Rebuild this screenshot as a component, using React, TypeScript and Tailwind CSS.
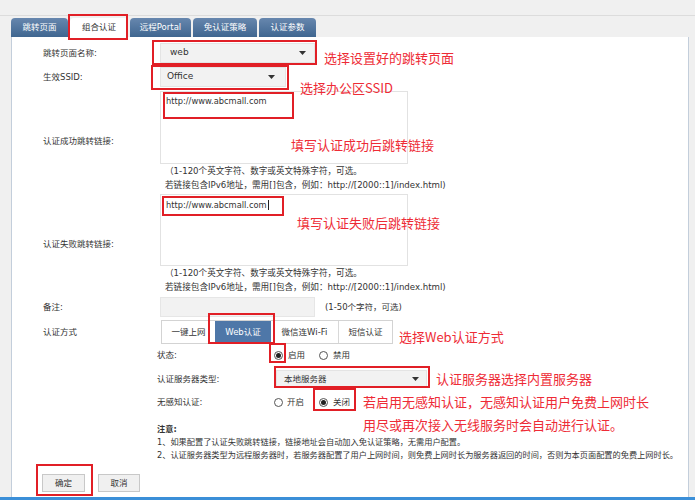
import React from "react";

const ui = "font-['DejaVu_Sans','Noto_Sans_CJK_SC',sans-serif]";
const note = "font-['Noto_Sans_CJK_SC',sans-serif] text-[13px] leading-[16px] text-[#ee2b36] whitespace-nowrap";

function Arrow() {
  return (
    <svg width="7" height="4" viewBox="0 0 7 4">
      <path d="M0 0h7L3.5 4z" fill="#333" />
    </svg>
  );
}

function Radio({ checked }: { checked?: boolean }) {
  return (
    <span className="w-[9px] h-[9px] rounded-full border border-[#555] bg-white flex items-center justify-center">
      {checked && <span className="w-[5px] h-[5px] rounded-full bg-[#222]" />}
    </span>
  );
}

function Label({ children }: { children: React.ReactNode }) {
  return <div className="w-[148px] shrink-0 pl-[31px] text-[8.5px] text-[#333]">{children}</div>;
}

function Hints() {
  return (
    <div className="pl-[5px] text-[8.6px] leading-[14px] text-[#333] whitespace-nowrap">
      <div>（1-120个英文字符、数字或英文特殊字符，可选。</div>
      <div>若链接包含IPv6地址，需用[]包含，例如：http://[2000::1]/index.html)</div>
    </div>
  );
}

const tabs = [
  { t: "跳转页面", w: "w-[57px]" },
  { t: "组合认证", w: "w-[58px]", active: true },
  { t: "远程Portal", w: "w-[61px]" },
  { t: "免认证策略", w: "w-[64px]" },
  { t: "认证参数", w: "w-[57px]" },
];

function RedBox({ className }: { className: string }) {
  return <div className={"absolute border-2 border-[#e11f26] " + className} />;
}

export default function App() {
  return (
    <div className={"relative w-[695px] h-[500px] bg-[#f0f0f0] overflow-hidden " + ui}>
      <div className="h-[16px] border-b border-[#dcdcdc]" />
      <div className="h-[21px] flex items-end pl-[11px] gap-[2px]">
        {tabs.map((tab) => (
          <div
            key={tab.t}
            className={
              "h-[19px] rounded-t-[4px] flex items-center justify-center text-[8.5px] " +
              tab.w +
              (tab.active
                ? " bg-white text-[#333]"
                : " bg-gradient-to-b from-[#6787ae] to-[#3f6690] text-white")
            }
          >
            {tab.t}
          </div>
        ))}
      </div>

      <div className="ml-[11px] w-[678px] h-[460px] bg-white border-x border-[#c3cedb] flex flex-col text-[#333]">
        <div className="mt-[6px] h-[20px] flex items-center">
          <Label>跳转页面名称:</Label>
          <div className="w-[155px] h-[20px] bg-[#f2f2f2] border border-[#e4e4e4] flex items-center justify-between pl-[9px] pr-[8px] text-[9px]">
            web
            <Arrow />
          </div>
        </div>

        <div className="mt-[4px] h-[20px] flex items-center">
          <Label>生效SSID:</Label>
          <div className="w-[126px] h-[20px] bg-[#f2f2f2] border border-[#e4e4e4] flex items-center justify-between pl-[6px] pr-[10px] text-[9px]">
            Office
            <Arrow />
          </div>
        </div>

        <div className="mt-[4px] flex items-center">
          <Label>认证成功跳转链接:</Label>
          <div>
            <div className="w-[248px] h-[73px] border border-[#e2e2e2] bg-white px-[5px] pt-[3px] text-[8.3px]">
              http://www.abcmall.com
            </div>
            <Hints />
          </div>
        </div>

        <div className="mt-[2px] flex items-center">
          <Label>认证失败跳转链接:</Label>
          <div>
            <div className="w-[248px] h-[72px] border border-[#e2e2e2] bg-white px-[5px] pt-[4px] text-[8.3px]">
              http://www.abcmall.com<span className="border-l border-[#222] ml-[1px]" />
            </div>
            <Hints />
          </div>
        </div>

        <div className="mt-[3px] h-[20px] flex items-center">
          <Label>备注:</Label>
          <div className="w-[155px] h-[20px] bg-[#f2f2f2] border border-[#e6e6e6]" />
          <span className="ml-[10px] text-[8.5px]">(1-50个字符，可选)</span>
        </div>

        <div className="mt-[3px] h-[24px] flex items-center">
          <Label>认证方式</Label>
          <div className="ml-[1px] h-[24px] flex border border-[#d3d3d3] bg-white text-[8.5px]">
            <div className="w-[53px] flex items-center justify-center">一键上网</div>
            <div className="w-[56px] flex items-center justify-center bg-[#4e77a8] text-white">Web认证</div>
            <div className="w-[68px] flex items-center justify-center border-r border-[#d8d8d8]">微信连Wi-Fi</div>
            <div className="w-[53px] flex items-center justify-center">短信认证</div>
          </div>
        </div>

        <div className="mt-[2px] h-[18px] flex items-center pl-[145px] text-[8.5px]">
          <div className="w-[117px]">状态:</div>
          <div className="w-[45px] flex items-center gap-[5px]">
            <Radio checked />
            启用
          </div>
          <div className="flex items-center gap-[5px]">
            <Radio />
            禁用
          </div>
        </div>

        <div className="mt-[6px] h-[18px] flex items-center pl-[145px] text-[8.5px]">
          <div className="w-[117px]">认证服务器类型:</div>
          <div className="ml-[2px] w-[151px] h-[18px] bg-[#f2f2f2] border border-[#e4e4e4] flex items-center justify-between pl-[7px] pr-[7px]">
            本地服务器
            <Arrow />
          </div>
        </div>

        <div className="mt-[5px] h-[18px] flex items-center pl-[145px] text-[8.5px]">
          <div className="w-[117px]">无感知认证:</div>
          <div className="w-[45px] flex items-center gap-[4px]">
            <Radio />
            开启
          </div>
          <div className="flex items-center gap-[5px]">
            <Radio checked />
            关闭
          </div>
        </div>

        <div className="mt-[12px] pl-[145px] text-[8.2px] leading-[13px] whitespace-nowrap">
          <div className="font-bold">注意:</div>
          <div>1、如果配置了认证失败跳转链接，链接地址会自动加入免认证策略，无需用户配置。</div>
          <div>2、认证服务器类型为远程服务器时，若服务器配置了用户上网时间，则免费上网时长为服务器返回的时间，否则为本页面配置的免费上网时长。</div>
        </div>

        <div className="mt-[12px] pl-[30px] flex gap-[13px] text-[8.5px]">
          <div className="w-[43px] h-[18px] bg-[#f0f0f0] border border-[#c8c8c8] flex items-center justify-center">确定</div>
          <div className="w-[42px] h-[18px] bg-[#f0f0f0] border border-[#c8c8c8] flex items-center justify-center">取消</div>
        </div>
      </div>
      <div className="h-[3px] bg-[#3b8fd8]" />

      <RedBox className="left-[68px] top-[14px] w-[60px] h-[26px]" />
      <RedBox className="left-[152px] top-[40px] w-[165px] h-[25px]" />
      <RedBox className="left-[151px] top-[65px] w-[138px] h-[25px]" />
      <RedBox className="left-[163px] top-[92px] w-[131px] h-[27px]" />
      <RedBox className="left-[162px] top-[196px] w-[122px] h-[20px]" />
      <RedBox className="left-[208px] top-[313px] w-[67px] h-[31px]" />
      <RedBox className="left-[269px] top-[343px] w-[17px] h-[20px]" />
      <RedBox className="left-[274px] top-[366px] w-[156px] h-[22px]" />
      <RedBox className="left-[313px] top-[388px] w-[43px] h-[23px]" />
      <RedBox className="left-[36px] top-[464px] w-[57px] h-[32px]" />

      <div className={"absolute left-[324px] top-[50px] " + note}>选择设置好的跳转页面</div>
      <div className={"absolute left-[300px] top-[80px] " + note}>选择办公区SSID</div>
      <div className={"absolute left-[291px] top-[137px] " + note}>填写认证成功后跳转链接</div>
      <div className={"absolute left-[297px] top-[215px] " + note}>填写认证失败后跳转链接</div>
      <div className={"absolute left-[399px] top-[329px] " + note}>选择Web认证方式</div>
      <div className={"absolute left-[436px] top-[371px] " + note}>认证服务器选择内置服务器</div>
      <div className={"absolute left-[363px] top-[394px] " + note}>若启用无感知认证，无感知认证用户免费上网时长</div>
      <div className={"absolute left-[363px] top-[417px] " + note}>用尽或再次接入无线服务时会自动进行认证。</div>
    </div>
  );
}
